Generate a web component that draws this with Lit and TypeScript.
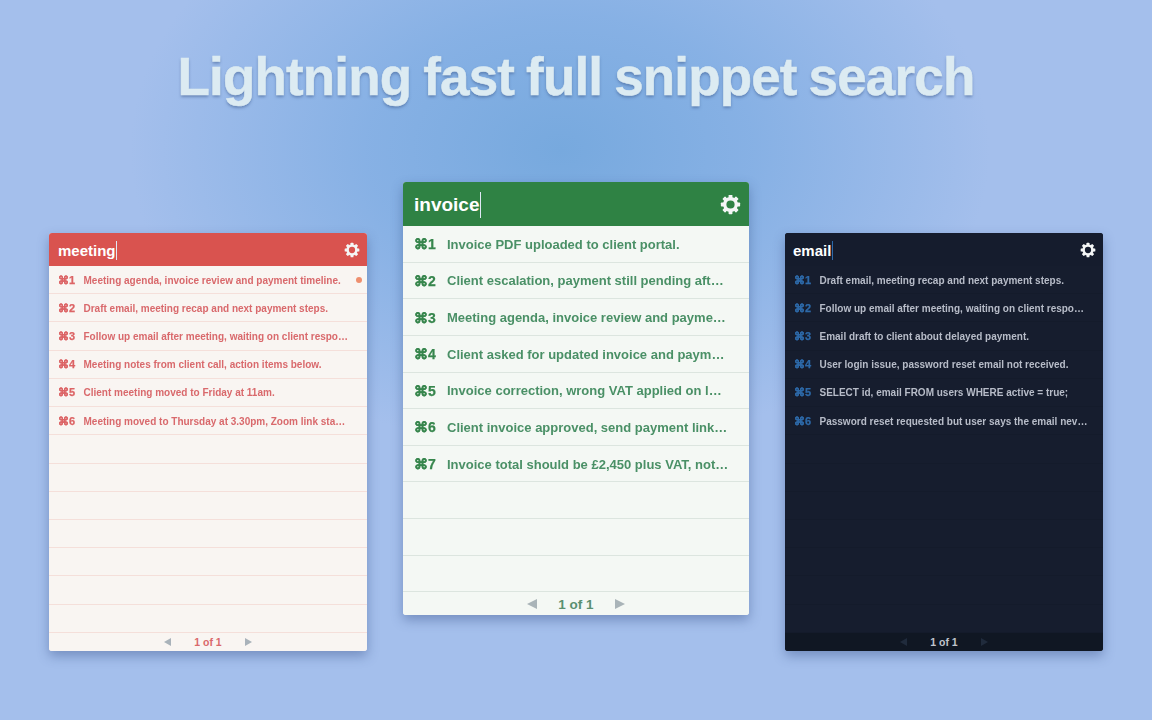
import { LitElement, html, css, svg } from "lit";
import { customElement, property } from "lit/decorators.js";

const teeth = [0, 45, 90, 135, 180, 225, 270, 315];
const gear = html`<svg class="gear" viewBox="0 0 24 24" aria-hidden="true">
  <circle cx="12" cy="12" r="6.6" fill="none" stroke="currentColor" stroke-width="3.8"></circle>
  ${teeth.map((a) => svg`<rect x="9.8" y="1" width="4.4" height="5" rx="0.8" fill="currentColor" transform="rotate(${a} 12 12)"></rect>`)}
</svg>`;

@customElement("snippet-window")
class SnippetWindow extends LitElement {
  @property() query = "";
  @property() tone = "red";
  @property() size = "small";
  @property({ type: Boolean }) dot = false;
  @property({ type: Array }) items: string[] = [];
  @property({ type: Number }) rows = 13;

  static styles = css`
    :host { display: block; }
    .win {
      display: flex; flex-direction: column; overflow: hidden; border-radius: 3px;
      font-family: "Liberation Sans", Arial, sans-serif; font-weight: 700;
      background: var(--body); box-shadow: 0 5px 12px rgba(45, 70, 125, 0.4);
      filter: blur(0.3px);
    }
    .red { --head: #d9534f; --body: #f9f5f2; --key: #dc6466; --text: #d9696c; --line: #f5dfda; --foot: #f9f5f2; --page: #d9696c; --arrow: #a9b2ba; --qx: 0px; }
    .green { --head: #2f8244; --body: #f4f8f4; --key: #37864d; --text: #4a9066; --line: #dce5df; --foot: #f4f8f4; --page: #5a9070; --arrow: #a9b4b8; --qx: 0px; }
    .dark { --head: #151c2d; --body: #161d2e; --key: #2d69a8; --text: #b7bcc8; --line: #141b2b; --foot: #101723; --page: #c0c4cc; --arrow: #202b3c; --qx: -1px; }
    .small { width: 318px; --head-h: 33px; --row-h: 28.23px; --foot-h: 18px; --q: 15px; --t: 10px; --k: 11px; --pad: 9px; --key-w: 25.5px; --pg: 10.5px; --gap: 23px; --gear: 16px; --gear-x: -2px; --arr-w: 7px; --arr-h: 8px; --caret: 19px; --foot-top: 0px; }
    .large { width: 346px; --head-h: 44px; --row-h: 36.63px; --foot-h: 23px; --q: 19px; --t: 13px; --k: 14px; --pad: 11px; --key-w: 33px; --pg: 13.5px; --gap: 21px; --gear: 21px; --gear-x: -3px; --arr-w: 10px; --arr-h: 11px; --caret: 26px; --foot-top: 1px; }
    .head {
      height: var(--head-h); display: flex; align-items: center; justify-content: space-between;
      background: var(--head); color: #fff; padding: 1px var(--pad) 0 var(--pad); box-sizing: border-box;
      font-size: var(--q);
    }
    .query { display: flex; align-items: center; margin-left: var(--qx); }
    .caret { width: 1px; height: var(--caret); background: #dfe8f5; margin-left: 0.5px; }
    .dark .caret { background: #2d69a8; }
    .gear { width: var(--gear); height: var(--gear); color: #f4f6f6; margin-right: var(--gear-x); margin-top: -1px; flex: none; }
    .row {
      position: relative; height: var(--row-h); box-sizing: border-box; display: flex; align-items: center;
      padding: 1px 0 0 var(--pad); border-bottom: 1px solid var(--line); white-space: nowrap;
    }
    .key { width: var(--key-w); flex: none; color: var(--key); font-size: var(--k); -webkit-text-stroke: 0.25px var(--key); }
    .text { color: var(--text); font-size: var(--t); }
    .dot { position: absolute; right: 5px; top: 50%; width: 6px; height: 6px; margin-top: -3px; border-radius: 50%; background: #ee8f6f; }
    .foot {
      height: var(--foot-h); display: flex; align-items: center; justify-content: center; gap: var(--gap);
      background: var(--foot); color: var(--page); font-size: var(--pg); box-sizing: border-box; padding-top: var(--foot-top);
    }
    .arrow { width: 0; height: 0; border-style: solid; border-color: transparent; border-width: calc(var(--arr-h) / 2) 0; }
    .prev { border-right: var(--arr-w) solid var(--arrow); }
    .next { border-left: var(--arr-w) solid var(--arrow); }
  `;

  render() {
    const blanks = Array.from({ length: this.rows - this.items.length });
    return html`<div class="win ${this.tone} ${this.size}">
      <div class="head">
        <div class="query"><span>${this.query}</span><span class="caret"></span></div>
        ${gear}
      </div>
      ${this.items.map(
        (t, i) => html`<div class="row">
          <span class="key">⌘${i + 1}</span><span class="text">${t}</span>
          ${this.dot && i === 0 ? html`<span class="dot"></span>` : ""}
        </div>`
      )}
      ${blanks.map(() => html`<div class="row"></div>`)}
      <div class="foot"><span class="arrow prev"></span><span>1 of 1</span><span class="arrow next"></span></div>
    </div>`;
  }
}

const meeting = [
  "Meeting agenda, invoice review and payment timeline.",
  "Draft email, meeting recap and next payment steps.",
  "Follow up email after meeting, waiting on client respo…",
  "Meeting notes from client call, action items below.",
  "Client meeting moved to Friday at 11am.",
  "Meeting moved to Thursday at 3.30pm, Zoom link sta…",
];
const invoice = [
  "Invoice PDF uploaded to client portal.",
  "Client escalation, payment still pending aft…",
  "Meeting agenda, invoice review and payme…",
  "Client asked for updated invoice and paym…",
  "Invoice correction, wrong VAT applied on l…",
  "Client invoice approved, send payment link…",
  "Invoice total should be £2,450 plus VAT, not…",
];
const email = [
  "Draft email, meeting recap and next payment steps.",
  "Follow up email after meeting, waiting on client respo…",
  "Email draft to client about delayed payment.",
  "User login issue, password reset email not received.",
  "SELECT id, email FROM users WHERE active = true;",
  "Password reset requested but user says the email nev…",
];

@customElement("app-root")
class AppRoot extends LitElement {
  static styles = css`
    :host { display: block; width: 1152px; height: 720px; overflow: hidden; }
    .page {
      height: 720px; box-sizing: border-box; padding-top: 46px;
      background:
        radial-gradient(ellipse 430px 300px at 560px 150px, #77a9de 0%, rgba(125, 172, 226, 0.75) 45%, rgba(163, 189, 236, 0) 100%),
        #a4bfec;
    }
    h1 {
      margin: 0; height: 136px; text-align: center; font: 700 53px/62px "Liberation Sans", Arial, sans-serif;
      letter-spacing: -0.85px; word-spacing: -1.9px; -webkit-text-stroke: 0.5px #dcebf2; color: #dcebf2;
      text-shadow: 0 2px 3px rgba(60, 90, 140, 0.55);
    }
    .windows { display: flex; justify-content: center; align-items: flex-start; gap: 36px; }
    .side { margin-top: 51px; }
  `;
  render() {
    return html`<div class="page">
      <h1>Lightning fast full snippet search</h1>
      <div class="windows">
        <snippet-window class="side" query="meeting" tone="red" size="small" dot .items=${meeting} .rows=${13}></snippet-window>
        <snippet-window query="invoice" tone="green" size="large" .items=${invoice} .rows=${10}></snippet-window>
        <snippet-window class="side" query="email" tone="dark" size="small" .items=${email} .rows=${13}></snippet-window>
      </div>
    </div>`;
  }
}
